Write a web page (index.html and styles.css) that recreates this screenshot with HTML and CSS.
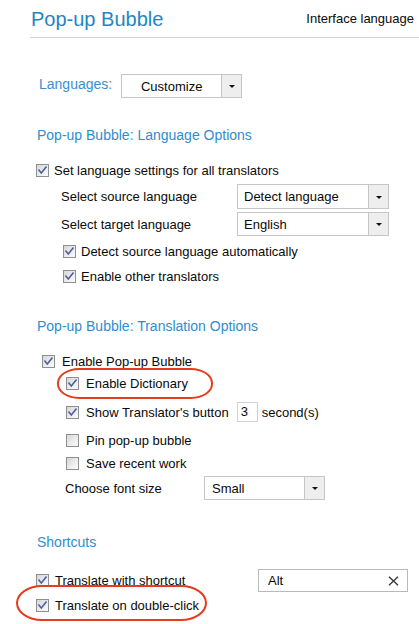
FILE: index.html
```html
<!DOCTYPE html>
<html>
<head>
<meta charset="utf-8">
<link rel="stylesheet" href="styles.css">
</head>
<body>
<div class="page">
  <header class="topbar">
    <h1 class="title">Pop-up Bubble</h1>
    <span class="iface">Interface language</span>
    <span class="iface-select"></span>
  </header>

  <div class="lang-row">
    <span class="lang-label">Languages:</span>
    <div class="select sel-custom"><span class="sel-value centered">Customize</span><span class="sel-arrow"><i class="tri"></i></span></div>
  </div>

  <h2 class="section mt-25">Pop-up Bubble: Language Options</h2>

  <div class="row h24 mt-11 ind-36">
    <span class="cb checked"><svg viewBox="0 0 11 11" width="11" height="11"><path d="M2 5.2 L4.3 8 L9 2.2" /></svg></span>
    <span class="lbl gap5">Set language settings for all translators</span>
  </div>
  <div class="row h25 mt-2 ind-61">
    <span class="field-label w176">Select source language</span>
    <div class="select sel-lang"><span class="sel-value">Detect language</span><span class="sel-arrow"><i class="tri"></i></span></div>
  </div>
  <div class="row h24 mt-3 ind-61">
    <span class="field-label w176">Select target language</span>
    <div class="select sel-lang"><span class="sel-value">English</span><span class="sel-arrow"><i class="tri"></i></span></div>
  </div>
  <div class="row h24 mt-3 ind-63">
    <span class="cb checked"><svg viewBox="0 0 11 11" width="11" height="11"><path d="M2 5.2 L4.3 8 L9 2.2" /></svg></span>
    <span class="lbl gap5">Detect source language automatically</span>
  </div>
  <div class="row h24 mt-1 ind-63">
    <span class="cb checked"><svg viewBox="0 0 11 11" width="11" height="11"><path d="M2 5.2 L4.3 8 L9 2.2" /></svg></span>
    <span class="lbl gap5">Enable other translators</span>
  </div>

  <h2 class="section mt-26">Pop-up Bubble: Translation Options</h2>

  <div class="row h22 mt-12 ind-42">
    <span class="cb checked"><svg viewBox="0 0 11 11" width="11" height="11"><path d="M2 5.2 L4.3 8 L9 2.2" /></svg></span>
    <span class="lbl gap7">Enable Pop-up Bubble</span>
  </div>
  <div class="row h22 ind-66">
    <span class="cb checked"><svg viewBox="0 0 11 11" width="11" height="11"><path d="M2 5.2 L4.3 8 L9 2.2" /></svg></span>
    <span class="lbl gap7">Enable Dictionary</span>
  </div>
  <div class="row h22 mt-7 ind-66">
    <span class="cb checked"><svg viewBox="0 0 11 11" width="11" height="11"><path d="M2 5.2 L4.3 8 L9 2.2" /></svg></span>
    <span class="lbl gap7">Show Translator's button</span>
    <span class="num-input">3</span>
    <span class="lbl">second(s)</span>
  </div>
  <div class="row h22 mt-6 ind-66">
    <span class="cb"></span>
    <span class="lbl gap7">Pin pop-up bubble</span>
  </div>
  <div class="row h22 mt-1 ind-66">
    <span class="cb"></span>
    <span class="lbl gap7">Save recent work</span>
  </div>
  <div class="row h24 mt-2 ind-65">
    <span class="field-label w139">Choose font size</span>
    <div class="select sel-font"><span class="sel-value">Small</span><span class="sel-arrow"><i class="tri"></i></span></div>
  </div>

  <h2 class="section mt-30">Shortcuts</h2>

  <div class="row h23 mt-15 ind-36">
    <span class="cb checked"><svg viewBox="0 0 11 11" width="11" height="11"><path d="M2 5.2 L4.3 8 L9 2.2" /></svg></span>
    <span class="lbl gap6 w203">Translate with shortcut</span>
    <div class="key-input"><span class="key-value">Alt</span><svg class="clear" viewBox="0 0 11 10" width="11" height="10"><path d="M1 0.8 L10 9.2 M10 0.8 L1 9.2" /></svg></div>
  </div>
  <div class="row h24 mt-1 ind-36">
    <span class="cb checked"><svg viewBox="0 0 11 11" width="11" height="11"><path d="M2 5.2 L4.3 8 L9 2.2" /></svg></span>
    <span class="lbl gap6">Translate on double-click</span>
  </div>

  <div class="mark mark-dict"></div>
  <div class="mark mark-dbl"></div>
</div>
</body>
</html>
```

FILE: styles.css
```css
html, body {
  margin: 0;
  padding: 0;
  background: #fff;
  overflow: hidden;
}
body {
  font-family: "Liberation Sans", Arial, sans-serif;
  font-size: 13px;
  color: #0a0a0a;
}
.page {
  position: relative;
  width: 419px;
  height: 624px;
  overflow: hidden;
}

/* header */
.topbar {
  display: flex;
  align-items: center;
  height: 37px;
  margin-left: 30px;
  margin-right: -40px;
  border-bottom: 1px solid #d3d3d3;
}
.title {
  flex: 1;
  margin: 0;
  padding-left: 1px;
  font-size: 20px;
  font-weight: normal;
  color: #1d86c4;
  line-height: 24px;
}
.iface {
  font-size: 13px;
  color: #0a0a0a;
}
.iface-select {
  width: 40px;
  height: 26px;
  margin-left: 5px;
  box-sizing: border-box;
  border: 1px solid #cfcfcf;
}

/* languages row */
.lang-row {
  display: flex;
  align-items: center;
  height: 24px;
  margin-top: 36px;
  padding-left: 39px;
}
.lang-label {
  font-size: 14px;
  color: #3a8fd0;
  margin-right: 9px;
  margin-bottom: 4px;
}

/* selects */
.select {
  display: flex;
  box-sizing: border-box;
  height: 100%;
  border: 1px solid #c6c6c6;
  background: #fff;
}
.sel-custom { width: 121px; height: 24px; }
.sel-lang { width: 152px; }
.sel-font { width: 121px; height: 24px; }
.sel-value {
  flex: 1;
  display: flex;
  align-items: center;
  padding-left: 6px;
  font-size: 13px;
}
.sel-font .sel-value { padding-left: 7px; }
.sel-value.centered {
  justify-content: center;
  padding-left: 0;
}
.sel-arrow {
  width: 19px;
  display: flex;
  align-items: center;
  justify-content: center;
  background: #eeeeee;
  border-left: 1px solid #c6c6c6;
}
.tri {
  width: 0;
  height: 0;
  border-left: 3px solid transparent;
  border-right: 3px solid transparent;
  border-top: 3px solid #111;
  margin-top: 1px;
}

/* section headers */
.section {
  margin: 0;
  height: 24px;
  line-height: 24px;
  padding-left: 37px;
  font-size: 14px;
  font-weight: normal;
  color: #2f8dce;
}

/* rows */
.row {
  display: flex;
  align-items: center;
}
.h22 { height: 22px; }
.h23 { height: 23px; }
.h24 { height: 24px; }
.h25 { height: 25px; }
.mt-1 { margin-top: 1px; }
.mt-2 { margin-top: 2px; }
.mt-3 { margin-top: 3px; }
.mt-6 { margin-top: 6px; }
.mt-7 { margin-top: 7px; }
.mt-11 { margin-top: 11px; }
.mt-12 { margin-top: 12px; }
.mt-15 { margin-top: 15px; }
.mt-25 { margin-top: 25px; }
.mt-26 { margin-top: 26px; }
.mt-30 { margin-top: 30px; }
.ind-36 { padding-left: 36px; }
.ind-42 { padding-left: 42px; }
.ind-61 { padding-left: 61px; }
.ind-63 { padding-left: 63px; }
.ind-65 { padding-left: 65px; }
.ind-66 { padding-left: 66px; }

.lbl { white-space: nowrap; }
.gap5 { margin-left: 5px; }
.gap6 { margin-left: 6px; }
.gap7 { margin-left: 7px; }
.w203 { width: 203px; }
.field-label { white-space: nowrap; }
.w176 { width: 176px; }
.w139 { width: 139px; }

/* checkbox */
.cb {
  flex: none;
  display: flex;
  align-items: center;
  justify-content: center;
  width: 13px;
  height: 13px;
  box-sizing: border-box;
  border: 1px solid #8e8f8f;
  background: linear-gradient(135deg, #d6d6d6 0%, #ececec 55%, #fbfbfb 100%);
}
.cb svg path {
  fill: none;
  stroke: #4b5fa3;
  stroke-width: 1.6;
  stroke-linecap: square;
}

/* number input */
.num-input {
  box-sizing: border-box;
  width: 21px;
  height: 20px;
  margin-left: 8px;
  margin-right: 4px;
  padding-left: 3px;
  line-height: 18px;
  border: 1px solid #d2d2d2;
  font-size: 13px;
}

/* shortcut key input */
.key-input {
  display: flex;
  align-items: center;
  box-sizing: border-box;
  width: 150px;
  height: 23px;
  border: 1px solid #b9b9b9;
  padding-left: 9px;
  padding-right: 8px;
}
.key-value { flex: 1; font-size: 13px; }
.clear path {
  fill: none;
  stroke: #3a3a3a;
  stroke-width: 1.4;
}

/* red annotation marks */
.mark {
  position: absolute;
  box-sizing: border-box;
  border: 2.6px solid #e63b1c;
}
.mark-dict {
  left: 57px;
  top: 368px;
  width: 156px;
  height: 31px;
  border-radius: 22px / 15px;
}
.mark-dbl {
  left: 16px;
  top: 585px;
  width: 191px;
  height: 36px;
  border-radius: 26px / 18px;
}
```
